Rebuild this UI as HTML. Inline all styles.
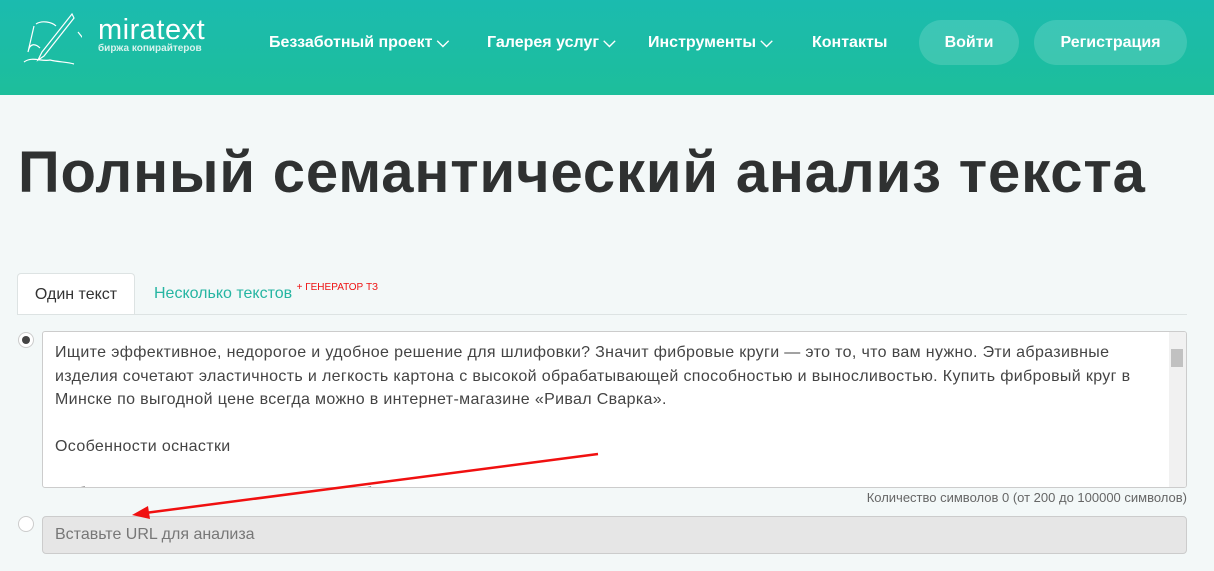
<!DOCTYPE html>
<html><head><meta charset="utf-8"><style>
*{margin:0;padding:0;box-sizing:border-box}
body{width:1214px;height:571px;overflow:hidden;background:#f3f8f8;font-family:"Liberation Sans","DejaVu Sans",sans-serif;position:relative}
.hdr{position:absolute;left:0;top:0;width:1214px;height:95px;background:linear-gradient(#1bbbaf,#1dbe9b)}
.nav{position:absolute;top:34px;color:#fff;font-weight:bold;font-size:16px}
.btn{position:absolute;top:20px;height:45px;border-radius:23px;background:rgba(255,255,255,.15);color:#fff;font-weight:bold;font-size:16px;text-align:center;line-height:45px}
h1{position:absolute;left:18px;top:139px;font-size:58px;font-weight:bold;color:#2f3131;letter-spacing:.85px;white-space:nowrap}
.tab{position:absolute;left:17px;top:273px;width:118px;height:42px;background:#fff;border:1px solid #dde3e3;border-bottom:none;border-radius:4px 4px 0 0;font-size:16px;color:#333;text-align:center;line-height:42px}
.line{position:absolute;left:17px;top:314px;width:1170px;height:1px;background:#dde3e3}
.ta{position:absolute;left:42px;top:331px;width:1145px;height:157px;background:#fff;border:1px solid #ccc;border-radius:3px;overflow:hidden;font-size:16px;line-height:23.5px;color:#444;padding:9px 40px 0 12px;white-space:nowrap;letter-spacing:.35px}
.radio{position:absolute;width:16px;height:16px;border-radius:50%;border:1px solid #ccc;background:#fff}
</style></head><body>
<div class="hdr">
<svg style="position:absolute;left:22px;top:12px" width="60" height="55" viewBox="0 0 60 55" fill="none" stroke="#fff" stroke-width="1.2"><path d="M50 2 L20 40 L16 48 L22 44 L52 6 Z"/><path d="M14 12 C20 8 30 10 34 14 M12 14 L6 40 C8 30 14 32 18 36 M2 50 C10 44 20 50 28 48 C36 50 46 50 52 52"/><path d="M56 20 L64 30"/></svg>
<div style="position:absolute;left:98px;top:14px;color:#fff;font-size:29px;letter-spacing:.5px">miratext</div>
<div style="position:absolute;left:98px;top:43px;color:#d8f3ee;font-size:10px;font-weight:bold">биржа копирайтеров</div>
<div class="nav" style="left:269px">Беззаботный проект ⌵</div>
<div class="nav" style="left:487px">Галерея услуг ⌵</div>
<div class="nav" style="left:648px">Инструменты ⌵</div>
<div class="nav" style="left:812px">Контакты</div>
<div class="btn" style="left:919px;width:100px">Войти</div>
<div class="btn" style="left:1034px;width:153px">Регистрация</div>
</div>
<h1>Полный семантический анализ текста</h1>
<div class="tab">Один текст</div>
<div style="position:absolute;left:154px;top:285px;font-size:16px;color:#26b5a2">Несколько текстов <span style="color:#e11;font-size:10px;position:relative;top:-8px">+ ГЕНЕРАТОР ТЗ</span></div>
<div class="line"></div>
<div class="radio" style="left:18px;top:332px"><div style="margin:3px;width:8px;height:8px;border-radius:50%;background:#444"></div></div>
<div class="ta">Ищите эффективное, недорогое и удобное решение для шлифовки? Значит фибровые круги — это то, что вам нужно. Эти абразивные<br>изделия сочетают эластичность и легкость картона с высокой обрабатывающей способностью и выносливостью. Купить фибровый круг в<br>Минске по выгодной цене всегда можно в интернет-магазине «Ривал Сварка».<br><br>Особенности оснастки<br><br>Фибровые круги применяются для обработки различных материалов: металла, дерева, пластика.
<div style="position:absolute;right:0;top:0;width:17px;height:155px;background:#f1f1f1"><div style="margin:17px 2px;width:12px;height:18px;background:#c1c1c1"></div></div></div>
<div style="position:absolute;right:27px;top:490px;font-size:13px;color:#666">Количество символов 0 (от 200 до 100000 символов)</div>
<div class="radio" style="left:18px;top:516px"></div>
<div style="position:absolute;left:42px;top:516px;width:1145px;height:38px;background:#e6e6e6;border:1px solid #ccc;border-radius:4px;font-size:16px;color:#777;line-height:36px;padding-left:12px">Вставьте URL для анализа</div>
<svg style="position:absolute;left:0;top:0" width="1214" height="571"><line x1="598" y1="454" x2="145" y2="513" stroke="#f01010" stroke-width="2.5"/><path d="M132 515 L148 506 L150 519 Z" fill="#f01010"/></svg>
</body></html>
